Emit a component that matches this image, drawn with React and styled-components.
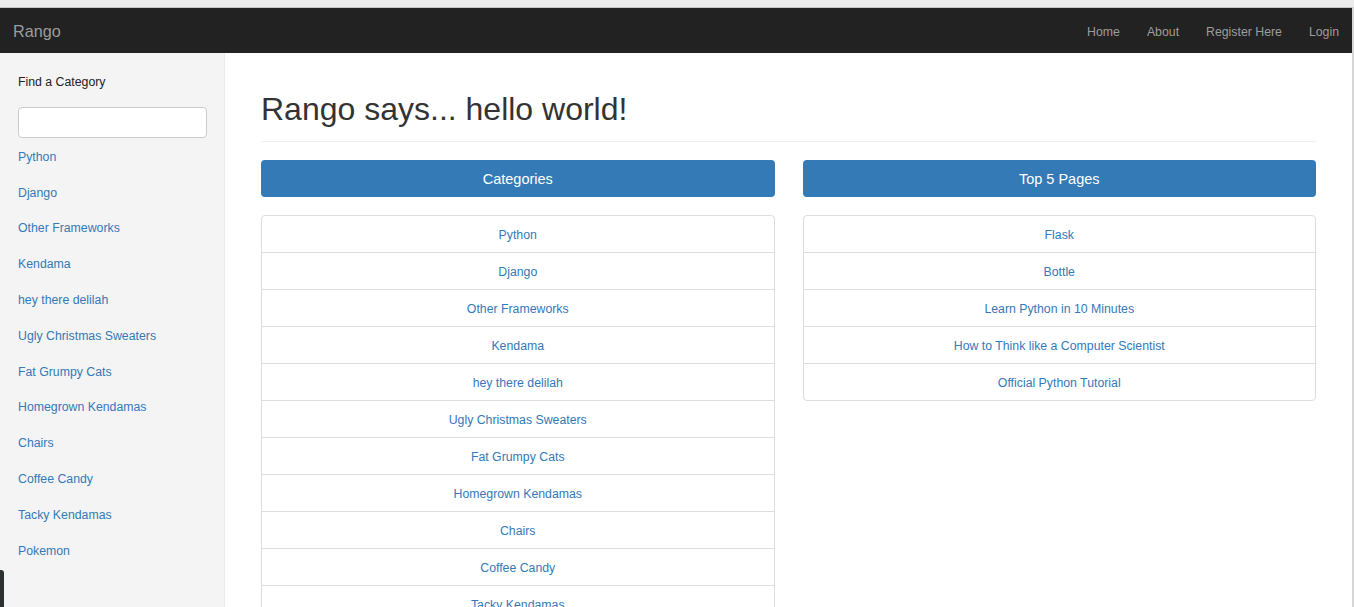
import styled, { createGlobalStyle } from "styled-components";

const categories = [
  "Python",
  "Django",
  "Other Frameworks",
  "Kendama",
  "hey there delilah",
  "Ugly Christmas Sweaters",
  "Fat Grumpy Cats",
  "Homegrown Kendamas",
  "Chairs",
  "Coffee Candy",
  "Tacky Kendamas",
  "Pokemon",
];

const topPages = [
  "Flask",
  "Bottle",
  "Learn Python in 10 Minutes",
  "How to Think like a Computer Scientist",
  "Official Python Tutorial",
];

function App() {
  return (
    <>
      <GlobalStyle />
      <Frame>
        <Window>
          <Navbar>
            <Brand href="#">Rango</Brand>
            <NavLinks>
              <NavLink href="#">Home</NavLink>
              <NavLink href="#">About</NavLink>
              <NavLink href="#">Register Here</NavLink>
              <NavLink href="#">Login</NavLink>
            </NavLinks>
          </Navbar>

          <Body>
            <Sidebar>
              <SideTitle>Find a Category</SideTitle>
              <SearchInput type="text" />
              {categories.map((c) => (
                <SideLink key={c} href="#">
                  {c}
                </SideLink>
              ))}
            </Sidebar>

            <Main>
              <PageHeader>
                <Title>Rango says... hello world!</Title>
              </PageHeader>

              <Columns>
                <Column>
                  <PanelBar>Categories</PanelBar>
                  <List>
                    {categories.map((c) => (
                      <ListItem key={c} href="#">
                        {c}
                      </ListItem>
                    ))}
                  </List>
                </Column>
                <Column>
                  <PanelBar>Top 5 Pages</PanelBar>
                  <List>
                    {topPages.map((p) => (
                      <ListItem key={p} href="#">
                        {p}
                      </ListItem>
                    ))}
                  </List>
                </Column>
              </Columns>
            </Main>
          </Body>
        </Window>
        <EdgeTab />
      </Frame>
    </>
  );
}
export default App;

const GlobalStyle = createGlobalStyle`
  html, body {
    margin: 0;
    padding: 0;
  }
  body {
    font-family: "Liberation Sans", Arial, sans-serif;
    font-size: 12.3px;
    color: #333;
    background: #ebebeb;
  }
  * {
    box-sizing: border-box;
  }
`;

const Frame = styled.div`
  padding-top: 7px;
  background: #ebebeb;
`;

const Window = styled.div`
  width: 1354px;
  border-top: 1px solid #c6c6c6;
  border-right: 2px solid #d6d6d6;
  background: #fff;
  min-height: 600px;
  display: flex;
  flex-direction: column;
`;

const Navbar = styled.nav`
  display: flex;
  align-items: center;
  justify-content: space-between;
  height: 45px;
  background: #222;
  padding: 2px 13px 0 13px;
`;

const Brand = styled.a`
  color: #9d9d9d;
  font-size: 16.2px;
  text-decoration: none;
`;

const NavLinks = styled.div`
  display: flex;
  gap: 27px;
`;

const NavLink = styled.a`
  color: #9d9d9d;
  font-size: 12.3px;
  text-decoration: none;
`;

const Body = styled.div`
  display: flex;
  flex: 1;
`;

const Sidebar = styled.aside`
  width: 225px;
  flex-shrink: 0;
  background: #f4f4f4;
  border-right: 1px solid #ebebeb;
  padding: 21px 17px 0 18px;
  display: flex;
  flex-direction: column;
  min-height: 560px;
`;

const SideTitle = styled.div`
  font-size: 12.3px;
  color: #222;
  line-height: 16px;
`;

const SearchInput = styled.input`
  margin-top: 17px;
  width: 189px;
  height: 31px;
  border: 1px solid #ccc;
  border-radius: 4px;
  background: #fff;
`;

const SideLink = styled.a`
  display: flex;
  align-items: center;
  height: 35.8px;
  padding-top: 2px;
  color: #337ab7;
  font-size: 12.3px;
  text-decoration: none;
`;

const Main = styled.main`
  flex: 1;
  padding: 36px 36px 0 36px;
`;

const PageHeader = styled.div`
  border-bottom: 1px solid #eee;
  padding-bottom: 12px;
`;

const Title = styled.h1`
  margin: 0;
  font-size: 32px;
  font-weight: 400;
  line-height: 40px;
  color: #333;
`;

const Columns = styled.div`
  display: grid;
  grid-template-columns: 1fr 1fr;
  gap: 28px;
  margin-top: 18px;
  align-items: start;
`;

const Column = styled.section`
  display: flex;
  flex-direction: column;
`;

const PanelBar = styled.div`
  height: 37px;
  display: flex;
  align-items: center;
  justify-content: center;
  background: #337ab7;
  color: #fff;
  font-size: 14.5px;
  border-radius: 4px;
`;

const List = styled.div`
  margin-top: 18px;
  border: 1px solid #ddd;
  border-radius: 4px;
  display: flex;
  flex-direction: column;
`;

const ListItem = styled.a`
  height: 37px;
  display: flex;
  align-items: center;
  justify-content: center;
  padding-top: 2px;
  color: #337ab7;
  font-size: 12.3px;
  text-decoration: none;
  border-top: 1px solid #ddd;

  &:first-child {
    border-top: none;
    height: 36px;
  }
`;

const EdgeTab = styled.div`
  position: fixed;
  left: 0;
  top: 570px;
  width: 4px;
  height: 40px;
  background: #2b3030;
  border-top-right-radius: 3px;
`;
